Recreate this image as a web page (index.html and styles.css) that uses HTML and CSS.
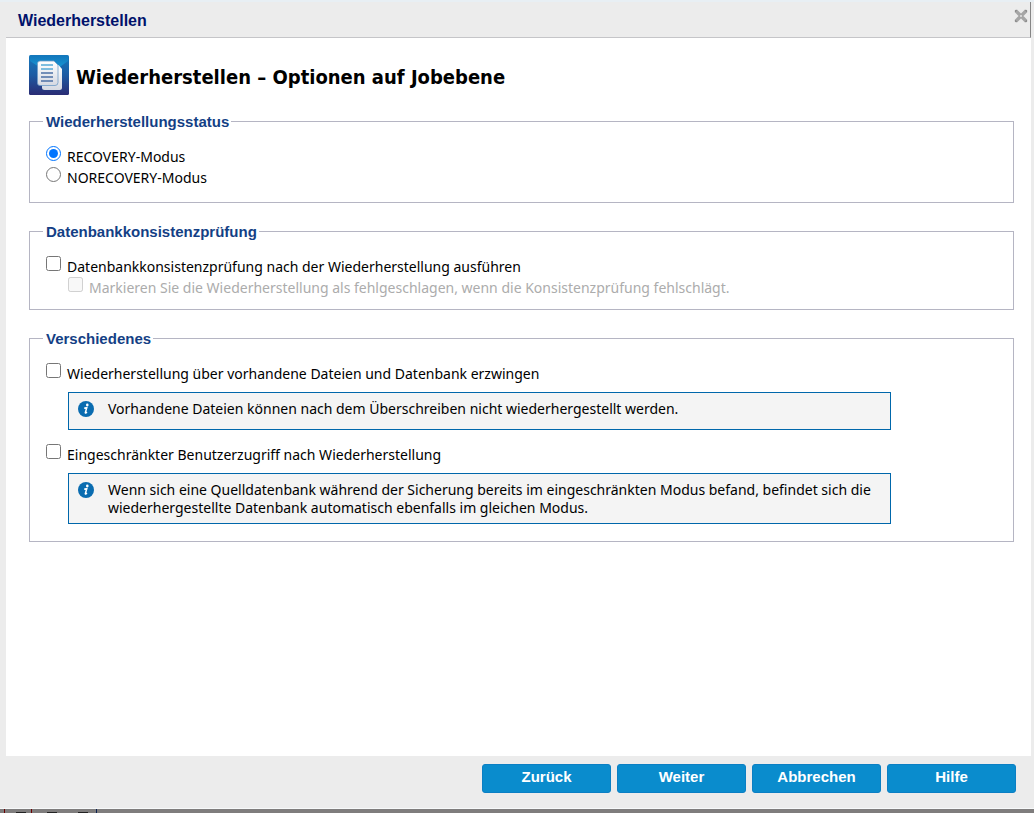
FILE: index.html
```html
<!DOCTYPE html>
<html lang="de">
<head>
    <meta charset="UTF-8">
    <meta name="viewport" content="width=device-width, initial-scale=1.0">
    <title>Wiederherstellen</title>
    <link rel="stylesheet" href="styles.css">
</head>
<body>

    <div class="dialog">
        <!-- Title bar -->
        <div class="title-bar">
            <span class="title">Wiederherstellen</span>
            <button type="button" class="close-btn" aria-label="Schließen">
                <svg width="14" height="14" viewBox="0 0 14 14">
                    <path d="M3 3L11 11M11 3L3 11" stroke="#a6a6a6" stroke-width="3.4" stroke-linecap="square"/>
                    <path d="M1 2.5L2.5 1M11.5 1L13 2.5M1 11.5L2.5 13M11.5 13L13 11.5" stroke="#808080" stroke-width="1.2"/>
                    <path d="M6 6L8 8M8 6L6 8" stroke="#d4d4d4" stroke-width="1"/>
                </svg>
            </button>
        </div>

        <!-- Options -->
        <form class="content" id="restore-form">
            <h1>
                <svg class="page-icon" width="40" height="40" viewBox="0 0 40 40">
                    <defs>
                        <linearGradient id="bg" x1="0" y1="0" x2="0" y2="1">
                            <stop offset="0" stop-color="#1579bd"/>
                            <stop offset="0.5" stop-color="#1d5ba3"/>
                            <stop offset="1" stop-color="#2a2c74"/>
                        </linearGradient>
                        <linearGradient id="shine" x1="0" y1="0" x2="0" y2="1">
                            <stop offset="0" stop-color="#1278bd"/>
                            <stop offset="1" stop-color="#1ba5df"/>
                        </linearGradient>
                        <linearGradient id="sheet" x1="0" y1="0" x2="0" y2="1">
                            <stop offset="0" stop-color="#ffffff"/>
                            <stop offset="1" stop-color="#d5d9e2"/>
                        </linearGradient>
                    </defs>
                    <rect width="40" height="40" rx="1.5" fill="url(#bg)"/>
                    <path d="M1 1H39V6L21 19L1 6Z" fill="url(#shine)"/>
                    <path d="M15 10H29.500L33 14V32.500Q33 35 30.500 35H15.500Q13 35 13 32.500V12Q13 10 15 10Z" fill="url(#sheet)"/>
                    <path d="M11 6H25L29 10V27.500Q29 30.500 26 30.500H11Q8.500 30.500 8.500 28V8.500Q8.500 6 11 6Z" fill="url(#sheet)" stroke="#6e9cc7" stroke-width="0.800"/>
                    <path d="M12 10H24M12 14H24" stroke="#55a9d6" stroke-width="1.500"/>
                    <path d="M12 18H24M12 22H24M12 26H24" stroke="#4c70a5" stroke-width="1.500"/>
                </svg>
                <span>Wiederherstellen – Optionen auf Jobebene</span>
            </h1>

            <fieldset class="group-status">
                <legend>Wiederherstellungsstatus</legend>
                <div class="option">
                    <input type="radio" name="mode" id="recovery" checked>
                    <label for="recovery">RECOVERY-Modus</label>
                </div>
                <div class="option">
                    <input type="radio" name="mode" id="norecovery">
                    <label for="norecovery">NORECOVERY-Modus</label>
                </div>
            </fieldset>

            <fieldset class="group-check">
                <legend>Datenbankkonsistenzprüfung</legend>
                <div class="option">
                    <input type="checkbox" id="check">
                    <label for="check">Datenbankkonsistenzprüfung nach der Wiederherstellung ausführen</label>
                </div>
                <div class="option sub-option">
                    <input type="checkbox" id="mark-failed" disabled>
                    <label for="mark-failed">Markieren Sie die Wiederherstellung als fehlgeschlagen, wenn die Konsistenzprüfung fehlschlägt.</label>
                </div>
            </fieldset>

            <fieldset class="group-misc">
                <legend>Verschiedenes</legend>
                <div class="option">
                    <input type="checkbox" id="force">
                    <label for="force">Wiederherstellung über vorhandene Dateien und Datenbank erzwingen</label>
                </div>
                <div class="info">
                    <svg class="info-icon" width="16" height="16" viewBox="0 0 16 16">
                        <circle cx="8" cy="8" r="8" fill="#0a6cb0"/>
                        <circle cx="9.300" cy="3.900" r="1.300" fill="#fff"/>
                        <path d="M6.200 7.200L8.800 6.600L7.300 11.800Q7.500 12.400 9 11.200" fill="none" stroke="#fff" stroke-width="1.500"/>
                    </svg>
                    <p>Vorhandene Dateien können nach dem Überschreiben nicht wiederhergestellt werden.</p>
                </div>
                <div class="option">
                    <input type="checkbox" id="restricted">
                    <label for="restricted">Eingeschränkter Benutzerzugriff nach Wiederherstellung</label>
                </div>
                <div class="info">
                    <svg class="info-icon" width="16" height="16" viewBox="0 0 16 16">
                        <circle cx="8" cy="8" r="8" fill="#0a6cb0"/>
                        <circle cx="9.300" cy="3.900" r="1.300" fill="#fff"/>
                        <path d="M6.200 7.200L8.800 6.600L7.300 11.800Q7.500 12.400 9 11.200" fill="none" stroke="#fff" stroke-width="1.500"/>
                    </svg>
                    <p>Wenn sich eine Quelldatenbank während der Sicherung bereits im eingeschränkten Modus befand, befindet sich die wiederhergestellte Datenbank automatisch ebenfalls im gleichen Modus.</p>
                </div>
            </fieldset>
        </form>

        <!-- Buttons -->
        <div class="footer">
            <button type="button">Zurück</button>
            <button type="submit" form="restore-form">Weiter</button>
            <button type="button">Abbrechen</button>
            <button type="button">Hilfe</button>
        </div>
    </div>

    <!-- Page behind the dialog -->
    <div class="backdrop">
        <span></span><span></span><span></span>
    </div>

</body>
</html>
```

FILE: styles.css
```css
* {
    box-sizing: border-box;
}

body {
    margin: 0;
    height: 100vh;
    display: flex;
    flex-direction: column;
    background-color: #ececec;
    color: #000;
    font-family: "Noto Sans", Tahoma, sans-serif;
    font-size: 14px;
}

.dialog {
    flex: 1;
    display: flex;
    flex-direction: column;
    border-top: 2px solid #e8eff4;
    border-bottom: 1px solid #f7f9fa;
}

/* Title bar */
.title-bar {
    display: flex;
    justify-content: space-between;
    height: 36px;
    margin: 0 3px 0 6px;
    padding-left: 12px;
    border-bottom: 1px solid #c5c5c8;
    border-right: 1px solid #858585;
}

.title {
    padding-top: 1px;
    color: #00126b;
    font-family: "Liberation Sans", Arial, sans-serif;
    font-size: 16px;
    font-weight: bold;
    line-height: 36px;
}

.close-btn {
    align-self: flex-start;
    display: flex;
    margin: 7px 2px 0 0;
    padding: 0;
    border: none;
    background: none;
    cursor: pointer;
}

/* Options */
.content {
    flex: 1;
    margin: 0 3px 0 6px;
    padding: 17px 17px 0 23px;
    background-color: #fff;
}

h1 {
    display: flex;
    align-items: center;
    gap: 7px;
    height: 40px;
    margin: 0 0 17px;
    font-family: "DejaVu Sans Condensed", Tahoma, sans-serif;
    font-size: 20px;
    line-height: 24px;
}

h1 span {
    padding-top: 4px;
}

.page-icon {
    flex: none;
}

fieldset {
    margin: 0 0 19px;
    padding: 16px 16px 14px;
    border: 1px solid #b5b5c3;
}

legend {
    margin-left: -3px;
    padding: 1px 2px 0 3px;
    color: #143f85;
    font-family: "Liberation Sans", Arial, sans-serif;
    font-size: 15px;
    font-weight: bold;
    line-height: 17px;
}

.group-check {
    padding-bottom: 11px;
}

.group-misc {
    padding-bottom: 17px;
}

.option {
    display: flex;
    align-items: flex-start;
    gap: 6px;
    line-height: 21px;
}

.option input {
    flex: none;
    width: 15px;
    height: 15px;
    margin: 0;
}

.sub-option {
    margin-left: 22px;
    color: #acacac;
}

/* Info boxes */
.info {
    display: flex;
    align-items: flex-start;
    gap: 14px;
    min-height: 38px;
    margin: 8px 106px 0 22px;
    padding: 7px 9px 6px;
    border: 1px solid #0067ab;
    background-color: #f4f4f4;
    line-height: 18px;
}

.info + .option {
    margin-top: 14px;
}

.info-icon {
    flex: none;
    margin-top: 1px;
}

.info p {
    margin: 0;
}

/* Buttons */
.footer {
    display: flex;
    justify-content: flex-end;
    gap: 6px;
    padding: 8px 18px 15px;
}

.footer button {
    width: 129px;
    height: 29px;
    padding: 0 0 5px;
    border: 1px solid #0b7fc4;
    border-radius: 3px;
    background-color: #0a8ccd;
    color: #fff;
    font-family: "Liberation Sans", Arial, sans-serif;
    font-size: 15px;
    font-weight: bold;
    cursor: pointer;
}

/* Page behind the dialog */
.backdrop {
    display: flex;
    height: 4px;
    padding-left: 4px;
    background-color: #7f7d7d;
}

.backdrop span {
    width: 27px;
    padding: 3px 0 0 11px;
    border-left: 1px solid #6b0000;
}

.backdrop span:nth-child(2) {
    width: 65px;
    padding-left: 15px;
}

.backdrop span:nth-child(3) {
    border-color: #0a2050;
}

.backdrop span:nth-child(-n+2)::after {
    content: '';
    display: block;
    width: 10px;
    height: 1px;
    background-color: #222;
}

.backdrop span:nth-child(2)::after {
    box-shadow: 31px 0 #222;
}
```
